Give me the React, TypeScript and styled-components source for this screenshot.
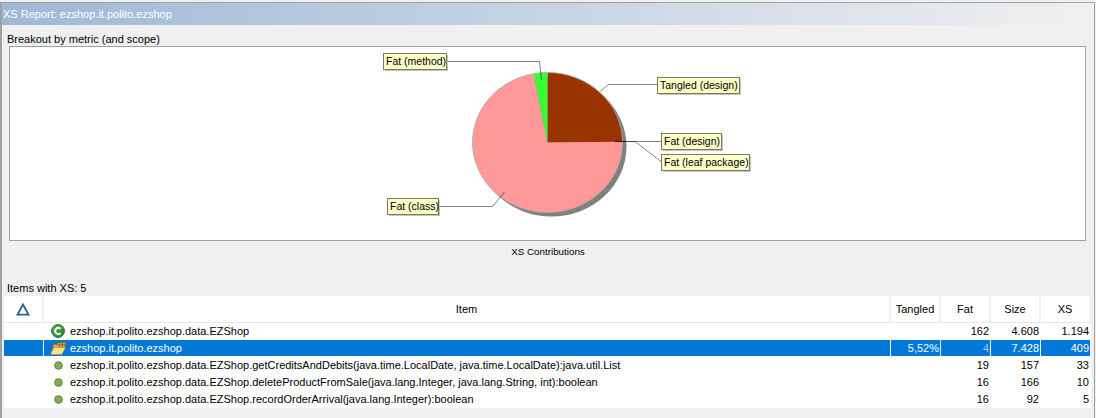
import * as React from 'react'
import styled, { createGlobalStyle } from 'styled-components'

const Global = createGlobalStyle`
  html, body { margin: 0; padding: 0; background: #f0f0f0; }
  body { font-family: "Liberation Sans", Arial, sans-serif; font-size: 11px; color: #000; }
`

const Page = styled.div`
  width: 1096px;
  height: 418px;
  box-sizing: border-box;
  padding: 2px 1px 0 0;
  overflow: hidden;
  background: #f0f0f0;
`

const Window = styled.div`
  height: 416px;
  box-sizing: border-box;
  display: flex;
  flex-direction: column;
  border-top: 1px solid #a0a0a0;
  border-left: 2px solid #a0a0a0;
  border-right: 1px solid #a0a0a0;
`

const TitleBar = styled.div`
  height: 22px;
  line-height: 22px;
  flex: none;
  padding-left: 1px;
  color: #fff;
  background: linear-gradient(to right, #9fb8d6, #f0f0f0);
`

const SectionLabel = styled.div`
  height: 21px;
  box-sizing: border-box;
  padding: 7px 0 0 5px;
  line-height: 14px;
  flex: none;
`

const ChartBox = styled.div`
  margin-left: 7px;
  width: 1077px;
  height: 195px;
  flex: none;
  box-sizing: border-box;
  border: 1px solid #a0a0a0;
  background: #fff;
`

const ChartSvg = styled.svg`
  display: block;
`

const ChartCaption = styled.div`
  height: 22px;
  line-height: 22px;
  text-align: center;
  font-size: 9.8px;
  flex: none;
`

const ItemsLabel = styled.div`
  margin-top: 18px;
  height: 15px;
  line-height: 15px;
  padding-left: 5px;
  flex: none;
`

const Table = styled.div`
  margin-left: 2px;
  width: 1087px;
  background: #fff;
`

const cols = '40px 847px 50px 50px 50px 50px'

const HeaderRow = styled.div`
  display: grid;
  grid-template-columns: ${cols};
  height: 27px;
  border-bottom: 1px solid #e8e8e8;
  box-sizing: border-box;
`

const HeaderCell = styled.div`
  display: flex;
  align-items: center;
  justify-content: center;
  border-right: 2px solid #f0f0f0;
`

const Row = styled.div<{ $selected?: boolean }>`
  display: grid;
  grid-template-columns: ${cols};
  height: 17px;
  box-sizing: border-box;
  line-height: 16px;
  border-bottom: 1px solid #fff;
  background: ${(p) => (p.$selected ? '#0078d7' : '#fff')};
  color: ${(p) => (p.$selected ? '#fff' : '#000')};
`

const IconCell = styled.div<{ $selected?: boolean }>`
  border-right: 1px solid ${(p) => (p.$selected ? '#fff' : 'transparent')};
`

const ItemCell = styled.div<{ $selected?: boolean }>`
  display: flex;
  align-items: center;
  gap: 4px;
  padding-left: 6px;
  border-right: 1px solid ${(p) => (p.$selected ? '#fff' : 'transparent')};
  white-space: nowrap;
`

const IconSlot = styled.span`
  width: 16px;
  height: 16px;
  display: flex;
  align-items: center;
  justify-content: center;
  flex: none;
`

const Num = styled.div<{ $selected?: boolean; $dim?: boolean }>`
  text-align: right;
  padding-right: 1px;
  border-right: 1px solid ${(p) => (p.$selected ? '#fff' : 'transparent')};
  color: ${(p) => (p.$dim ? '#a9c8e8' : 'inherit')};
`

const ClassIcon = () => (
  <svg width="14" height="14" viewBox="0 0 14 14">
    <defs>
      <linearGradient id="classFill" x1="0" y1="0" x2="1" y2="1">
        <stop offset="0" stopColor="#57ad57" />
        <stop offset="1" stopColor="#2c8236" />
      </linearGradient>
    </defs>
    <circle cx="7" cy="7" r="6.4" fill="url(#classFill)" stroke="#1f6e2a" />
    <path d="M9.5 4.8 A3.1 3.1 0 1 0 9.5 9.2" fill="none" stroke="#fff" strokeWidth="1.8" />
  </svg>
)

const FolderIcon = () => (
  <svg width="16" height="13" viewBox="0 0 16 13">
    <path d="M3 2.5 L7 2.5 L8 0.5 L15.5 0.5 L14.5 8 L3 8 Z" fill="#d9ac4c" stroke="#8a6a20" strokeWidth="0.7" />
    <path d="M9.5 0.5 V5.5 M12.5 0.5 V5.5 M7 3 H15.4" stroke="#7d5e1c" strokeWidth="0.8" />
    <path d="M0.5 12.5 L3.5 5.5 L15.5 5.5 L12 12.5 Z" fill="#fbe08a" stroke="#b08a30" strokeWidth="0.7" />
  </svg>
)

const MethodIcon = () => (
  <svg width="9" height="9" viewBox="0 0 9 9">
    <circle cx="4.5" cy="4.5" r="3.8" fill="#7fae52" stroke="#55803a" />
  </svg>
)

const DeltaIcon = () => (
  <svg width="14" height="13" viewBox="0 0 14 13">
    <path d="M7 1.5 L12.6 11.7 L1.4 11.7 Z" fill="none" stroke="#2a6098" strokeWidth="1.8" />
  </svg>
)

type Item = {
  icon: React.ReactElement
  name: string
  tangled?: string
  fat: string
  size: string
  xs: string
  selected?: boolean
}

const items: Item[] = [
  { icon: <ClassIcon />, name: 'ezshop.it.polito.ezshop.data.EZShop', fat: '162', size: '4.608', xs: '1.194' },
  { icon: <FolderIcon />, name: 'ezshop.it.polito.ezshop', tangled: '5,52%', fat: '4', size: '7.428', xs: '409', selected: true },
  { icon: <MethodIcon />, name: 'ezshop.it.polito.ezshop.data.EZShop.getCreditsAndDebits(java.time.LocalDate, java.time.LocalDate):java.util.List', fat: '19', size: '157', xs: '33' },
  { icon: <MethodIcon />, name: 'ezshop.it.polito.ezshop.data.EZShop.deleteProductFromSale(java.lang.Integer, java.lang.String, int):boolean', fat: '16', size: '166', xs: '10' },
  { icon: <MethodIcon />, name: 'ezshop.it.polito.ezshop.data.EZShop.recordOrderArrival(java.lang.Integer):boolean', fat: '16', size: '92', xs: '5' },
]

// pie geometry in svg coordinates (svg starts at 10,47 on the page)
const CX = 537.5
const CY = 95.5
const RX = 75
const RY = 70

const pt = (deg: number) => {
  const a = ((deg - 90) * Math.PI) / 180
  return `${(CX + RX * Math.cos(a)).toFixed(1)} ${(CY + RY * Math.sin(a)).toFixed(1)}`
}

const slice = (from: number, to: number) =>
  `M${CX} ${CY} L${pt(from)} A${RX} ${RY} 0 ${to - from > 180 ? 1 : 0} 1 ${pt(to)} Z`

const Leader = ({ d }: { d: string }) => (
  <path d={d} fill="none" stroke="#000" strokeOpacity="0.48" strokeWidth="1" />
)

const Tip = ({ x, y, w, label }: { x: number; y: number; w: number; label: string }) => (
  <g>
    <rect x={x + 2} y={y + 2} width={w} height={16} fill="#c4c4c4" />
    <rect x={x + 0.5} y={y + 0.5} width={w} height={16} fill="#ffffc8" stroke="#7a7a5c" />
    <text x={x + 3} y={y + 12} fontSize="10.5" fontFamily='"Liberation Sans", Arial, sans-serif' fill="#000">
      {label}
    </text>
  </g>
)

const Pie = () => (
  <ChartSvg width="1075" height="193" viewBox="0 0 1075 193">
    <ellipse cx={CX + 4} cy={CY + 4} rx={RX} ry={RY} fill="#808080" />
    <path d={slice(0, 89.4)} fill="#993300" />
    <path d={slice(89.4, 349.5)} fill="#ff9999" />
    <path d={slice(349.5, 360)} fill="#33ff33" />
    <ellipse cx={CX} cy={CY} rx={RX} ry={RY} fill="none" stroke="#a8a8a8" strokeWidth="0.8" />
    <Leader d="M436 14.5 H529.5 L531.5 33" />
    <Leader d="M590 44.5 L598.5 37.5 H647" />
    <Leader d="M605 94.5 H651" />
    <Leader d="M605 94.5 H625 L651 114.5" />
    <Leader d="M428 159.5 H482.5 L494.5 145" />
    <Tip x={373} y={6} w={63} label="Fat (method)" />
    <Tip x={647} y={30} w={82} label="Tangled (design)" />
    <Tip x={651} y={86} w={60} label="Fat (design)" />
    <Tip x={651} y={107} w={88} label="Fat (leaf package)" />
    <Tip x={377} y={151} w={51} label="Fat (class)" />
  </ChartSvg>
)

export default function App() {
  return (
    <Page>
      <Global />
      <Window>
        <TitleBar>XS Report: ezshop.it.polito.ezshop</TitleBar>
        <SectionLabel>Breakout by metric (and scope)</SectionLabel>
        <ChartBox>
          <Pie />
        </ChartBox>
        <ChartCaption>XS Contributions</ChartCaption>
        <ItemsLabel>Items with XS: 5</ItemsLabel>
        <Table>
          <HeaderRow>
            <HeaderCell>
              <DeltaIcon />
            </HeaderCell>
            <HeaderCell>Item</HeaderCell>
            <HeaderCell>Tangled</HeaderCell>
            <HeaderCell>Fat</HeaderCell>
            <HeaderCell>Size</HeaderCell>
            <HeaderCell>XS</HeaderCell>
          </HeaderRow>
          {items.map((it) => (
            <Row key={it.name} $selected={it.selected}>
              <IconCell $selected={it.selected} />
              <ItemCell $selected={it.selected}>
                <IconSlot>{it.icon}</IconSlot>
                {it.name}
              </ItemCell>
              <Num $selected={it.selected}>{it.tangled}</Num>
              <Num $selected={it.selected} $dim={it.selected}>
                {it.fat}
              </Num>
              <Num $selected={it.selected}>{it.size}</Num>
              <Num $selected={it.selected}>{it.xs}</Num>
            </Row>
          ))}
        </Table>
      </Window>
    </Page>
  )
}
